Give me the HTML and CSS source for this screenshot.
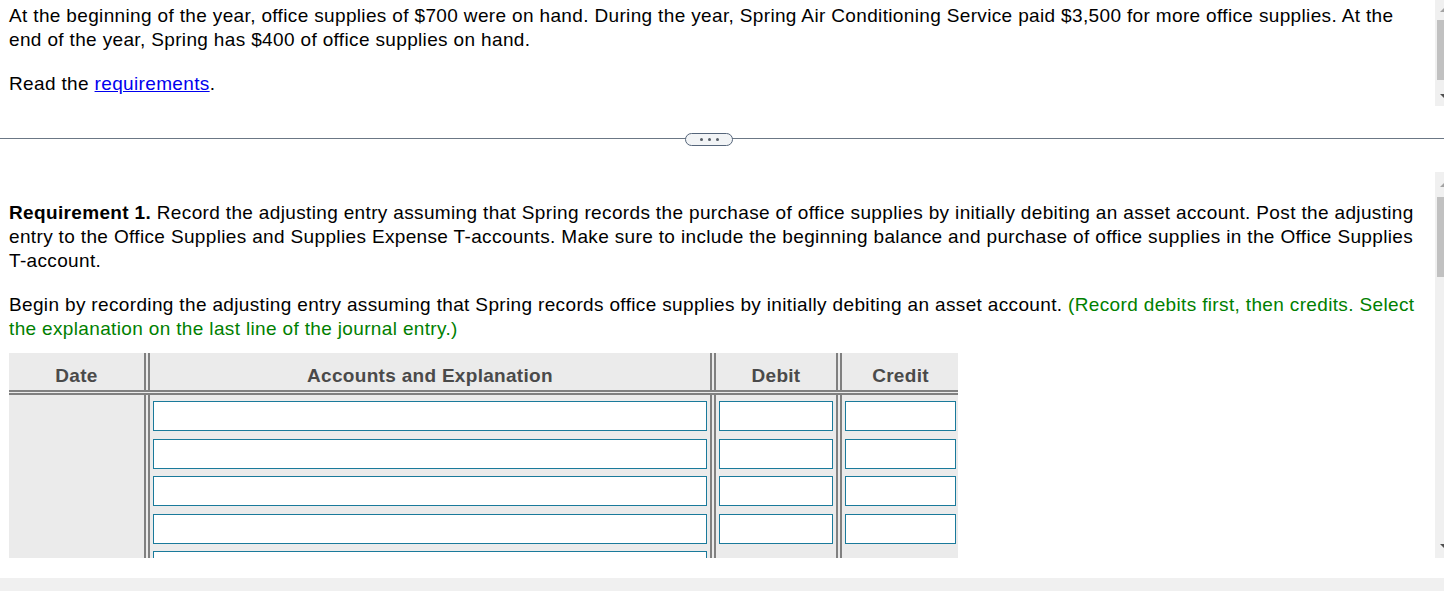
FILE: index.html
```html
<!DOCTYPE html>
<html lang="en">
<head>
<meta charset="utf-8">
<title>Adjusting entry</title>
<link rel="stylesheet" href="styles.css">
</head>
<body>
<div class="page">
  <div class="pane pane-top">
    <div class="pane-content top-content">
      <p>At the beginning of the year, office supplies of $700 were on hand. During the year, Spring Air Conditioning Service paid $3,500 for more office supplies. At the end of the year, Spring has $400 of office supplies on hand.</p>
      <p>Read the <a class="link" href="#">requirements</a>.</p>
    </div>
    <div class="scrollbar sb-top">
      <div class="arrow-box up-box"><span class="tri tri-up"></span></div>
      <div class="thumb"></div>
      <div class="sb-fill"></div>
      <div class="arrow-box down-box"><span class="tri tri-down"></span></div>
    </div>
  </div>

  <div class="divider"><span class="pill"><i></i><i></i><i></i></span></div>

  <div class="pane pane-bottom">
    <div class="pane-content bottom-content">
      <p><b>Requirement 1.</b> Record the adjusting entry assuming that Spring records the purchase of office supplies by initially debiting an asset account. Post the adjusting entry to the Office Supplies and Supplies Expense T-accounts. Make sure to include the beginning balance and purchase of office supplies in the Office Supplies T-account.</p>
      <p class="tight">Begin by recording the adjusting entry assuming that Spring records office supplies by initially debiting an asset account. <span class="hint">(Record debits first, then credits. Select the explanation on the last line of the journal entry.)</span></p>

      <div class="journal">
        <div class="jrow jhead">
          <div class="cell">Date</div>
          <div class="cell">Accounts and Explanation</div>
          <div class="cell">Debit</div>
          <div class="cell last">Credit</div>
        </div>
        <div class="jrow jbody">
          <div class="cell"></div>
          <div class="cell"><input class="field" type="text"></div>
          <div class="cell"><input class="field" type="text"></div>
          <div class="cell last"><input class="field" type="text"></div>
        </div>
        <div class="jrow jbody">
          <div class="cell"></div>
          <div class="cell"><input class="field" type="text"></div>
          <div class="cell"><input class="field" type="text"></div>
          <div class="cell last"><input class="field" type="text"></div>
        </div>
        <div class="jrow jbody">
          <div class="cell"></div>
          <div class="cell"><input class="field" type="text"></div>
          <div class="cell"><input class="field" type="text"></div>
          <div class="cell last"><input class="field" type="text"></div>
        </div>
        <div class="jrow jbody">
          <div class="cell"></div>
          <div class="cell"><input class="field" type="text"></div>
          <div class="cell"><input class="field" type="text"></div>
          <div class="cell last"><input class="field" type="text"></div>
        </div>
        <div class="jrow jbody">
          <div class="cell"></div>
          <div class="cell"><input class="field" type="text"></div>
          <div class="cell"></div>
          <div class="cell last"></div>
        </div>
        <div class="jrow jbody">
          <div class="cell"></div>
          <div class="cell"><input class="field" type="text"></div>
          <div class="cell"></div>
          <div class="cell last"></div>
        </div>
      </div>
    </div>
    <div class="scrollbar sb-bottom">
      <div class="arrow-box up-box2"><span class="tri tri-up"></span></div>
      <div class="thumb thumb2"></div>
      <div class="sb-fill"></div>
      <div class="arrow-box down-box2"><span class="tri tri-down"></span></div>
    </div>
  </div>

  <div class="gap"></div>
  <div class="statusbar"></div>
</div>
</body>
</html>
```

FILE: styles.css
```css
html, body {
  margin: 0;
  padding: 0;
  background: #ffffff;
}

body {
  font-family: Arial, "Liberation Sans", sans-serif;
  font-size: 19px;
  line-height: 24px;
  letter-spacing: 0.35px;
  color: #000000;
}

.page {
  width: 1444px;
  height: 591px;
  overflow: hidden;
  display: flex;
  flex-direction: column;
}

.pane {
  display: flex;
  flex-direction: row;
  flex: none;
  overflow: hidden;
}

.pane-top {
  height: 106px;
}

.pane-bottom {
  height: 386px;
}

.pane-content {
  flex: 1;
  min-width: 0;
  overflow: hidden;
  padding: 0 10px 0 9px;
}

.top-content {
  padding-top: 4px;
}

.bottom-content {
  padding-top: 29px;
}

p {
  margin: 0 0 20px 0;
}

p.tight {
  margin-bottom: 12px;
}

.link {
  color: #0000ee;
  text-decoration: underline;
}

.hint {
  color: #008000;
}

/* fake scrollbars */
.scrollbar {
  width: 9px;
  flex: none;
  background: #f0f0f0;
  display: flex;
  flex-direction: column;
}

.arrow-box {
  flex: none;
  display: flex;
  align-items: center;
  padding-left: 5px;
}

.up-box { height: 20px; }
.down-box { height: 20px; }
.up-box2 { height: 25px; }
.down-box2 { height: 24px; }

.thumb {
  flex: none;
  height: 60px;
  margin-left: 2px;
  background: #c1c1c1;
}

.thumb2 {
  height: 80px;
}

.sb-fill {
  flex: 1;
}

.tri {
  display: block;
  width: 0;
  height: 0;
  border-left: 4px solid transparent;
  border-right: 4px solid transparent;
}

.tri-up {
  border-bottom: 4px solid #a3a3a3;
}

.tri-down {
  border-top: 4px solid #505050;
}

/* divider */
.divider {
  flex: none;
  height: 66px;
  display: flex;
  align-items: center;
  justify-content: center;
  padding-right: 26px;
  background: linear-gradient(#6b7785, #6b7785) 0 32px / 100% 1px no-repeat;
}

.pill {
  width: 48px;
  height: 13px;
  box-sizing: border-box;
  border: 1px solid #55657a;
  border-radius: 7px;
  background: #f2f4f6;
  display: flex;
  align-items: center;
  justify-content: center;
  gap: 5px;
}

.pill i {
  display: block;
  width: 3px;
  height: 3px;
  border-radius: 50%;
  background: #555d66;
}

/* journal table */
.journal {
  width: 949px;
  background: #ebebeb;
}

.jrow {
  display: grid;
  grid-template-columns: 141px 566px 126px 116px;
}

.cell {
  box-sizing: border-box;
  border-right: 6px double #808080;
  padding: 0 3px;
}

.cell.last {
  border-right: none;
  padding-right: 2px;
}

.jhead {
  height: 42px;
  border-bottom: 5px double #808080;
  box-sizing: border-box;
}

.jhead .cell {
  display: flex;
  align-items: center;
  justify-content: center;
  font-weight: bold;
  color: #4a4a4a;
  padding-top: 8px;
  letter-spacing: 0.3px;
}

.jbody .cell {
  height: 37.5px;
  padding-top: 6px;
}

.field {
  display: block;
  width: 100%;
  height: 30px;
  box-sizing: border-box;
  margin: 0;
  padding: 0 4px;
  border: 1px solid #1a7a9b;
  background: #ffffff;
  font: inherit;
  outline: none;
}

.gap {
  flex: none;
  height: 20px;
}

.statusbar {
  flex: none;
  height: 13px;
  background: #f0f0f0;
}
```
